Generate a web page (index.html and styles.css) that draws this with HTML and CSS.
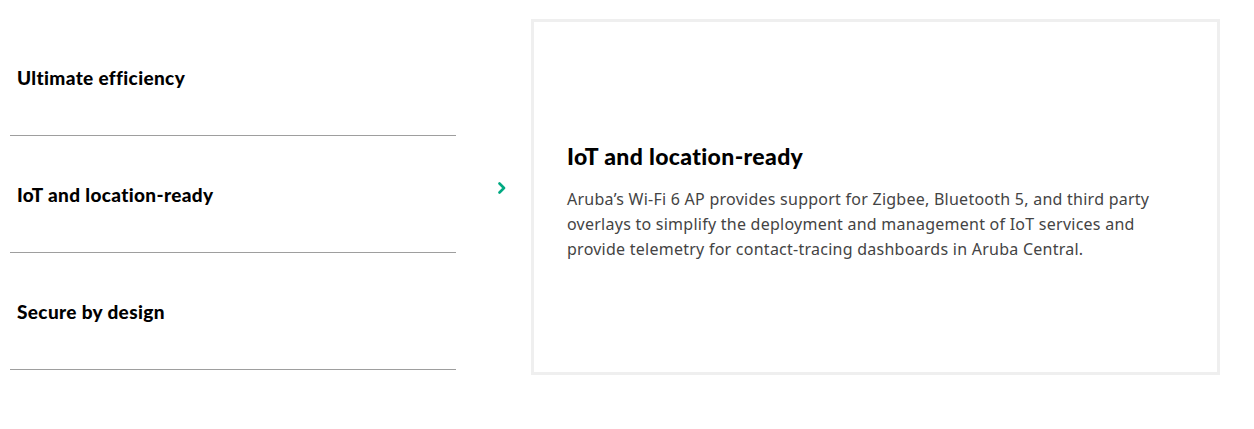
FILE: index.html
```html
<!DOCTYPE html>
<html lang="en">
<head>
<meta charset="utf-8">
<title>Features</title>
<link rel="stylesheet" href="styles.css">
</head>
<body>
<div class="feature-tabs">
  <ul class="tab-list">
    <li class="tab"><span class="tab-label">Ultimate efficiency</span></li>
    <li class="tab active"><span class="tab-label">IoT and location-ready</span></li>
    <li class="tab"><span class="tab-label">Secure by design</span></li>
  </ul>
  <div class="indicator">
    <svg width="8" height="12" viewBox="0 0 8 12" aria-hidden="true"><path d="M1.5 1.5 L6 6 L1.5 10.5" fill="none" stroke="#01a982" stroke-width="2.6" stroke-linecap="round" stroke-linejoin="round"/></svg>
  </div>
  <div class="panel">
    <h2 class="panel-title">IoT and location-ready</h2>
    <p class="panel-text">Aruba’s Wi-Fi 6 AP provides support for Zigbee, Bluetooth 5, and third party overlays to simplify the deployment and management of IoT services and provide telemetry for contact-tracing dashboards in Aruba Central.</p>
  </div>
</div>
</body>
</html>
```
FILE: styles.css
```css
html, body {
  margin: 0;
  padding: 0;
  background: #fff;
}
body {
  font-family: "Lato", "Liberation Sans", sans-serif;
  color: #000;
}
.feature-tabs {
  display: flex;
  align-items: flex-start;
  padding: 19px 0 0 10px;
}
.tab-list {
  list-style: none;
  margin: 0;
  padding: 0;
  width: 446px;
  flex: none;
}
.tab {
  display: flex;
  align-items: center;
  padding-left: 7px;
  box-sizing: border-box;
  height: 117px;
  border-bottom: 1px solid #9e9e9e;
}
.tab-label {
  font-weight: 900;
  font-size: 19px;
  letter-spacing: 0.35px;
}
.indicator {
  width: 75px;
  flex: none;
  height: 338px;
  display: flex;
  align-items: center;
  padding-left: 42px;
  box-sizing: border-box;
}
.panel {
  width: 689px;
  height: 356px;
  box-sizing: border-box;
  border: 3px solid #efefef;
  padding: 121px 40px 0 33px;
}
.panel-title {
  margin: 0 0 18px;
  font-size: 23px;
  font-weight: 900;
  line-height: 26px;
  letter-spacing: 0.35px;
}
.panel-text {
  margin: 0;
  font-family: "Noto Sans", "Open Sans", sans-serif;
  font-size: 16px;
  line-height: 25px;
  letter-spacing: 0.25px;
  color: #444;
  max-width: 600px;
}
```
